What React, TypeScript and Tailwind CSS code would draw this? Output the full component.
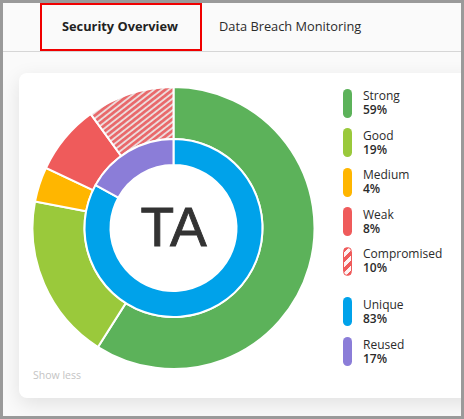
const CX = 141.5
const CY = 141

function arc(r0: number, r1: number, from: number, to: number) {
  const pt = (r: number, p: number) => {
    const a = (p / 100) * Math.PI * 2
    return `${(CX + r * Math.sin(a)).toFixed(2)} ${(CY - r * Math.cos(a)).toFixed(2)}`
  }
  const large = to - from > 50 ? 1 : 0
  return `M${pt(r1, from)}A${r1} ${r1} 0 ${large} 1 ${pt(r1, to)}L${pt(r0, to)}A${r0} ${r0} 0 ${large} 0 ${pt(r0, from)}Z`
}

const outer = [
  { fill: '#5cb25a', from: 0, to: 59 },
  { fill: '#9ac93b', from: 59, to: 78 },
  { fill: '#ffb600', from: 78, to: 82 },
  { fill: '#ef5b5b', from: 82, to: 90 },
  { fill: 'url(#hatch)', from: 90, to: 100 },
]

const inner = [
  { fill: '#00a2ea', from: 0, to: 83 },
  { fill: '#8b7dd8', from: 83, to: 100 },
]

function Donut() {
  return (
    <div className="relative h-[283px] w-[283px] shrink-0">
      <svg width="283" height="283" viewBox="0 0 283 283">
        <defs>
          <pattern id="hatch" width="4.6" height="4.6" patternUnits="userSpaceOnUse" patternTransform="rotate(-38)">
            <rect width="4.6" height="4.6" fill="#ecdcdc" />
            <rect width="4.6" height="2.7" fill="#e9686a" />
          </pattern>
        </defs>
        {outer.map((s) => (
          <path key={s.from} d={arc(89, 141, s.from, s.to)} fill={s.fill} stroke="#fff" strokeWidth="2" />
        ))}
        {inner.map((s) => (
          <path key={s.from} d={arc(63, 89, s.from, s.to)} fill={s.fill} stroke="#fff" strokeWidth="2" />
        ))}
      </svg>
      <div className="absolute inset-0 flex items-center justify-center pb-[2px] font-['Liberation_Sans',sans-serif] text-[55px] leading-none text-[#333] [-webkit-text-stroke:0.9px_#333]">
        TA
      </div>
    </div>
  )
}

function LegendItem({ name, pct, swatch }: { name: string; pct: string; swatch: string }) {
  return (
    <div className="flex h-[30px] items-center">
      <div className={`h-[29px] w-[9px] rounded-full ${swatch}`} />
      <div className="ml-[11px] text-[12px] leading-[14px] text-[#2b2b2b]">
        <div className="whitespace-nowrap">{name}</div>
        <div className="font-semibold">{pct}</div>
      </div>
    </div>
  )
}

export default function App() {
  return (
    <div className="h-[419px] w-[464px] overflow-hidden bg-[#9a9a9a] p-[3px] font-['Open_Sans','Noto_Sans',sans-serif]">
      <div className="h-[413px] w-[458px] overflow-hidden bg-[#fafafa]">
        <div className="flex h-[49px] border-b border-[#d6d6d6] pl-[37px] text-[12.8px]">
          <div className="flex h-[48px] w-[162px] items-center justify-center border-2 border-[#f00000] pr-[2px] font-bold text-[#222]">
            Security Overview
          </div>
          <div className="ml-[17px] flex h-[48px] items-center text-[#2b2b2b]">Data Breach Monitoring</div>
        </div>
        <div className="mt-[21px] ml-[16px] h-[325px] w-[460px] rounded-lg bg-white pt-[14px] pl-[13px] shadow-[0_6px_20px_rgba(0,0,0,0.1)]">
          <div className="flex">
            <Donut />
            <div className="ml-[28px] flex flex-col pt-[1px]">
              <div className="flex flex-col gap-[9.6px]">
                <LegendItem name="Strong" pct="59%" swatch="bg-[#5cb25a]" />
                <LegendItem name="Good" pct="19%" swatch="bg-[#9ac93b]" />
                <LegendItem name="Medium" pct="4%" swatch="bg-[#ffb600]" />
                <LegendItem name="Weak" pct="8%" swatch="bg-[#ef5b5b]" />
                <LegendItem
                  name="Compromised"
                  pct="10%"
                  swatch="border border-[#ef5b5b] bg-[repeating-linear-gradient(135deg,#ef5b5b_0px,#ef5b5b_3.5px,#fdf3f3_3.5px,#fdf3f3_7px)]"
                />
              </div>
              <div className="mt-[20.4px] flex flex-col gap-[10px]">
                <LegendItem name="Unique" pct="83%" swatch="bg-[#00a2ea]" />
                <LegendItem name="Reused" pct="17%" swatch="bg-[#8b7dd8]" />
              </div>
            </div>
          </div>
          <div className="-mt-[2px] ml-[1px] text-[10.5px] leading-[14px] text-[#c4c4c4]">Show less</div>
        </div>
      </div>
    </div>
  )
}
